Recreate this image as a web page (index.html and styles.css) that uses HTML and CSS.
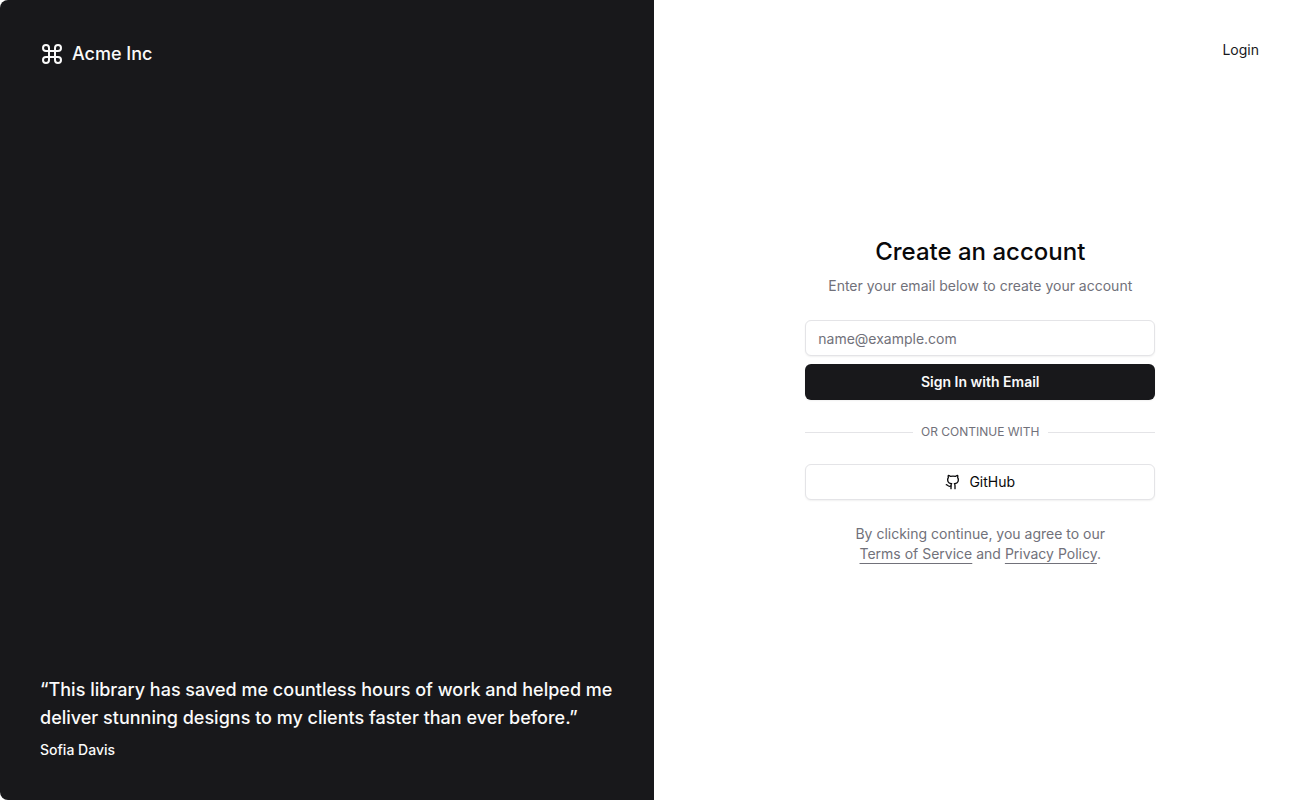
FILE: index.html
```
<!DOCTYPE html>
<html lang="en">
<head>
  <meta charset="UTF-8" />
  <meta name="viewport" content="width=device-width, initial-scale=1" />
  <title>Create an account - Acme Inc</title>
  <link rel="stylesheet" href="styles.css">
</head>
<body>

<div class="page">
  <aside class="brand-panel">
    <div class="brand">
      <svg class="brand-icon" viewBox="0 0 24 24" fill="none" stroke="currentColor" stroke-width="2" stroke-linecap="round" stroke-linejoin="round" aria-hidden="true">
        <path d="M15 6v12a3 3 0 1 0 3-3H6a3 3 0 1 0 3 3V6a3 3 0 1 0-3 3h12a3 3 0 1 0-3-3" />
      </svg>
      Acme Inc
    </div>
    <blockquote class="quote">
      <p>“This library has saved me countless hours of work and helped me deliver stunning designs to my clients faster than ever before.”</p>
      <footer>Sofia Davis</footer>
    </blockquote>
  </aside>

  <div class="form-panel">
    <nav class="top-nav">
      <a href="#login" class="login-link">Login</a>
    </nav>

    <main class="signup">
      <div class="heading">
        <h1>Create an account</h1>
        <p>Enter your email below to create your account</p>
      </div>

      <form class="email-form">
        <input class="field" type="email" placeholder="name@example.com" aria-label="Email" autocomplete="email">
        <button type="submit" class="btn btn-primary">Sign In with Email</button>
      </form>

      <div class="divider">Or continue with</div>

      <button type="button" class="btn btn-outline">
        <svg class="btn-icon" viewBox="0 0 24 24" fill="none" stroke="currentColor" stroke-width="2" stroke-linecap="round" stroke-linejoin="round" aria-hidden="true">
          <path d="M15 22v-4a4.8 4.8 0 0 0-1-3.5c3 0 6-2 6-5.5.08-1.25-.27-2.48-1-3.5.28-1.15.28-2.35 0-3.5 0 0-1 0-3 1.5-2.64-.5-5.36-.5-8 0C6 2 5 2 5 2c-.3 1.15-.3 2.35 0 3.5A5.403 5.403 0 0 0 4 9c0 3.5 3 5.5 6 5.5-.39.49-.68 1.05-.85 1.65-.17.6-.22 1.23-.15 1.85v4" />
          <path d="M9 18c-4.51 2-5-2-7-2" />
        </svg>
        GitHub
      </button>

      <p class="terms">
        By clicking continue, you agree to our
        <a href="#terms">Terms of Service</a> and <a href="#privacy">Privacy Policy</a>.
      </p>
    </main>
  </div>
</div>

</body>
</html>
```
FILE: styles.css
```
* {
  box-sizing: border-box;
}
body {
  margin: 0;
  font-family: Inter, "Liberation Sans", sans-serif;
  font-size: 14px;
  line-height: 20px;
  color: #09090b;
  background-color: #fff;
  overflow-x: hidden;
}
h1, p, blockquote {
  margin: 0;
}
/* runs under the scrollbar gutter on the right */
.page {
  display: grid;
  grid-template-columns: 1fr 1fr;
  width: calc(100% + 17px);
  min-height: 100vh;
}

/* dark side */
.brand-panel {
  display: flex;
  flex-direction: column;
  justify-content: space-between;
  padding: 40px;
  color: #fafafa;
  background-color: #18181b;
  border-radius: 8px 0 0 8px;
}
.brand {
  display: flex;
  align-items: center;
  gap: 8px;
  font-size: 18px;
  line-height: 28px;
  font-weight: 500;
}
.brand-icon {
  width: 24px;
  height: 24px;
}
.quote {
  display: grid;
  gap: 8px;
  font-weight: 500;
}
.quote p {
  font-size: 18px;
  line-height: 28px;
}

/* sign up side */
.form-panel {
  display: grid;
  grid-template-rows: 100px 1fr 100px;
  justify-items: center;
}
.top-nav {
  justify-self: end;
  padding: 32px 32px 0 0;
}
.login-link {
  display: block;
  padding: 8px 16px;
  color: #18181b;
  text-decoration: none;
}
.signup {
  display: flex;
  flex-direction: column;
  justify-content: center;
  gap: 24px;
  width: 350px;
  max-width: 100%;
}
.heading {
  display: grid;
  gap: 8px;
  text-align: center;
}
.heading h1 {
  font-size: 24px;
  line-height: 32px;
  font-weight: 500;
}
.heading p, .terms {
  color: #71717a;
}
.email-form {
  display: grid;
  gap: 8px;
}
.field, .btn {
  width: 100%;
  height: 36px;
  font-family: inherit;
  font-size: 14px;
  line-height: 20px;
  border-radius: 6px;
  box-shadow: 0 1px 2px rgba(0, 0, 0, 0.06);
}
.field {
  padding: 4px 12px;
  border: 1px solid #e4e4e7;
  background-color: #fff;
}
.field::placeholder {
  color: #71717a;
}
.btn {
  display: flex;
  align-items: center;
  justify-content: center;
  gap: 8px;
  cursor: pointer;
}
.btn-primary {
  border: none;
  color: #fafafa;
  background-color: #18181b;
  font-weight: 600;
}
.btn-outline {
  border: 1px solid #e4e4e7;
  color: #09090b;
  background-color: #fff;
}
.btn-icon {
  width: 16px;
  height: 16px;
}
.divider {
  display: flex;
  align-items: center;
  gap: 8px;
  font-size: 12px;
  line-height: 16px;
  color: #71717a;
  text-transform: uppercase;
}
.divider::before, .divider::after {
  content: "";
  flex: 1;
  height: 1px;
  background-color: #e4e4e7;
}
.terms {
  padding: 0 32px;
  text-align: center;
}
.terms a {
  color: inherit;
  text-decoration: underline;
  text-underline-offset: 4px;
}
```
